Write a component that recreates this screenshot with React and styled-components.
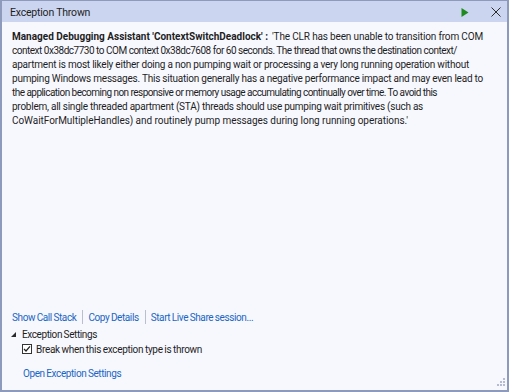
import React, { useLayoutEffect, useRef, useState } from "react";
import styled, { createGlobalStyle } from "styled-components";

const Global = createGlobalStyle`
  html, body { margin: 0; padding: 0; background: #ffffff; }
  body {
    font-family: Roboto, "Liberation Sans", sans-serif;
    font-size: 10px;
    letter-spacing: -0.4px;
    word-spacing: -0.5px;
    color: #1e1e1e;
  }
`;

const Window = styled.div`
  box-sizing: border-box;
  width: 509px;
  height: 392px;
  display: flex;
  flex-direction: column;
  border: 2px solid #8e9abb;
  border-top-width: 1px;
  background: #f7f8fe;
  position: relative;
`;

const TitleBar = styled.div`
  height: 21px;
  flex: none;
  display: flex;
  align-items: center;
  background: #ccd5f0;
  padding: 1px 4px 0 8px;
  box-sizing: border-box;
`;

const Title = styled.div`
  flex: 1;
  font-size: 10.5px;
  letter-spacing: -0.2px;
  word-spacing: 0;
  color: #1e1e1e;
`;

const IconButton = styled.button`
  border: none;
  background: transparent;
  padding: 0;
  width: 14px;
  height: 16px;
  margin-left: ${(p) => p.$gap || 0}px;
  display: flex;
  align-items: center;
  justify-content: center;
`;

const Body = styled.div`
  flex: 1;
  display: flex;
  flex-direction: column;
  padding: 8px 0 9px 10px;
`;

const Message = styled.div`
  flex: 1;
  line-height: 14px;
  color: #1e1e1e;
`;

const Line = styled.div`
  display: flex;
  white-space: nowrap;
  height: 14px;
`;

const FitSpan = styled.span`
  display: inline-block;
  white-space: nowrap;
  word-spacing: normal;
  font-weight: ${(p) => (p.$bold ? 700 : 400)};
  margin-left: ${(p) => p.$offset || 0}px;
`;

const Links = styled.div`
  display: flex;
  align-items: center;
  height: 16px;
  margin-bottom: 2px;
`;

const Link = styled.a`
  color: #1a66c2;
  text-decoration: none;
  cursor: pointer;
`;

const Sep = styled.span`
  width: 1px;
  height: 14px;
  background: #b9bfcf;
  margin: 0 5px 0 6px;
`;

const SettingsHeader = styled.div`
  display: flex;
  align-items: center;
  height: 14px;
  margin-left: -1px;
`;

const Triangle = styled.span`
  width: 0;
  height: 0;
  border-left: 5px solid transparent;
  border-bottom: 5px solid #2a2a2a;
  margin: 0 6px 0 0;
`;

const CheckRow = styled.label`
  display: flex;
  align-items: center;
  gap: 4px;
  margin-left: 10px;
  margin-top: 1px;
  height: 14px;
  letter-spacing: -0.3px;
`;

const Box = styled.span`
  box-sizing: border-box;
  width: 10px;
  height: 10px;
  border: 1px solid #333;
  background: #fff;
  display: flex;
  align-items: center;
  justify-content: center;
`;

const Footer = styled.div`
  margin: 9px 0 0 11px;
  height: 16px;
  display: flex;
  align-items: center;
`;

const Grip = styled.svg`
  position: absolute;
  right: 2px;
  bottom: 3px;
`;

function Fit({ width, bold, offset, children }) {
  const ref = useRef(null);
  const [ls, setLs] = useState(0);
  useLayoutEffect(() => {
    const el = ref.current;
    el.style.letterSpacing = "0px";
    const natural = el.getBoundingClientRect().width;
    const n = el.textContent.length;
    setLs((width - natural) / n);
  }, [width]);
  return (
    <FitSpan ref={ref} $bold={bold} $offset={offset} style={{ letterSpacing: ls + "px" }}>
      {children}
    </FitSpan>
  );
}

const lines = [
  ["context 0x38dc7730 to COM context 0x38dc7608 for 60 seconds. The thread that owns the destination context/", 445],
  ["apartment is most likely either doing a non pumping wait or processing a very long running operation without", 457],
  ["pumping Windows messages. This situation generally has a negative performance impact and may even lead to", 471],
  ["the application becoming non responsive or memory usage accumulating continually over time. To avoid this", 425],
  ["problem, all single threaded apartment (STA) threads should use pumping wait primitives (such as", 411],
  ["CoWaitForMultipleHandles) and routinely pump messages during long running operations.'", 396],
];

export default function App() {
  return (
    <>
      <Global />
      <Window>
        <TitleBar>
          <Title>Exception Thrown</Title>
          <IconButton aria-label="Continue">
            <svg width="8" height="9" viewBox="0 0 8 9">
              <path d="M0.5 0 L7.5 4.5 L0.5 9 Z" fill="#1f8a1f" />
            </svg>
          </IconButton>
          <IconButton aria-label="Close" $gap={17}>
            <svg width="10" height="10" viewBox="0 0 10 10">
              <path d="M0.5 0.5 L9.5 9.5 M9.5 0.5 L0.5 9.5" stroke="#2b2b2b" strokeWidth="1" />
            </svg>
          </IconButton>
        </TitleBar>
        <Body>
          <Message>
            <Line>
              <Fit width={256} bold>Managed Debugging Assistant 'ContextSwitchDeadlock' :</Fit>
              <Fit width={211} offset={4}>'The CLR has been unable to transition from COM</Fit>
            </Line>
            {lines.map(([l, w]) => (
              <Line key={l}>
                <Fit width={w}>{l}</Fit>
              </Line>
            ))}
          </Message>
          <Links>
            <Link>Show Call Stack</Link>
            <Sep />
            <Link>Copy Details</Link>
            <Sep />
            <Link>Start Live Share session...</Link>
          </Links>
          <SettingsHeader>
            <Triangle />
            Exception Settings
          </SettingsHeader>
          <CheckRow>
            <Box>
              <svg width="8" height="8" viewBox="0 0 8 8">
                <path d="M1 4 L3 6 L7 1.3" stroke="#1e1e1e" strokeWidth="1.2" fill="none" />
              </svg>
            </Box>
            Break when this exception type is thrown
          </CheckRow>
          <Footer>
            <Link>Open Exception Settings</Link>
          </Footer>
        </Body>
        <Grip width="9" height="9" viewBox="0 0 9 9">
          {[[7, 0], [7, 3], [4, 3], [7, 6], [4, 6], [1, 6]].map(([x, y]) => (
            <rect key={x + "-" + y} x={x} y={y} width="2" height="2" fill="#b4bcd4" />
          ))}
        </Grip>
      </Window>
    </>
  );
}
